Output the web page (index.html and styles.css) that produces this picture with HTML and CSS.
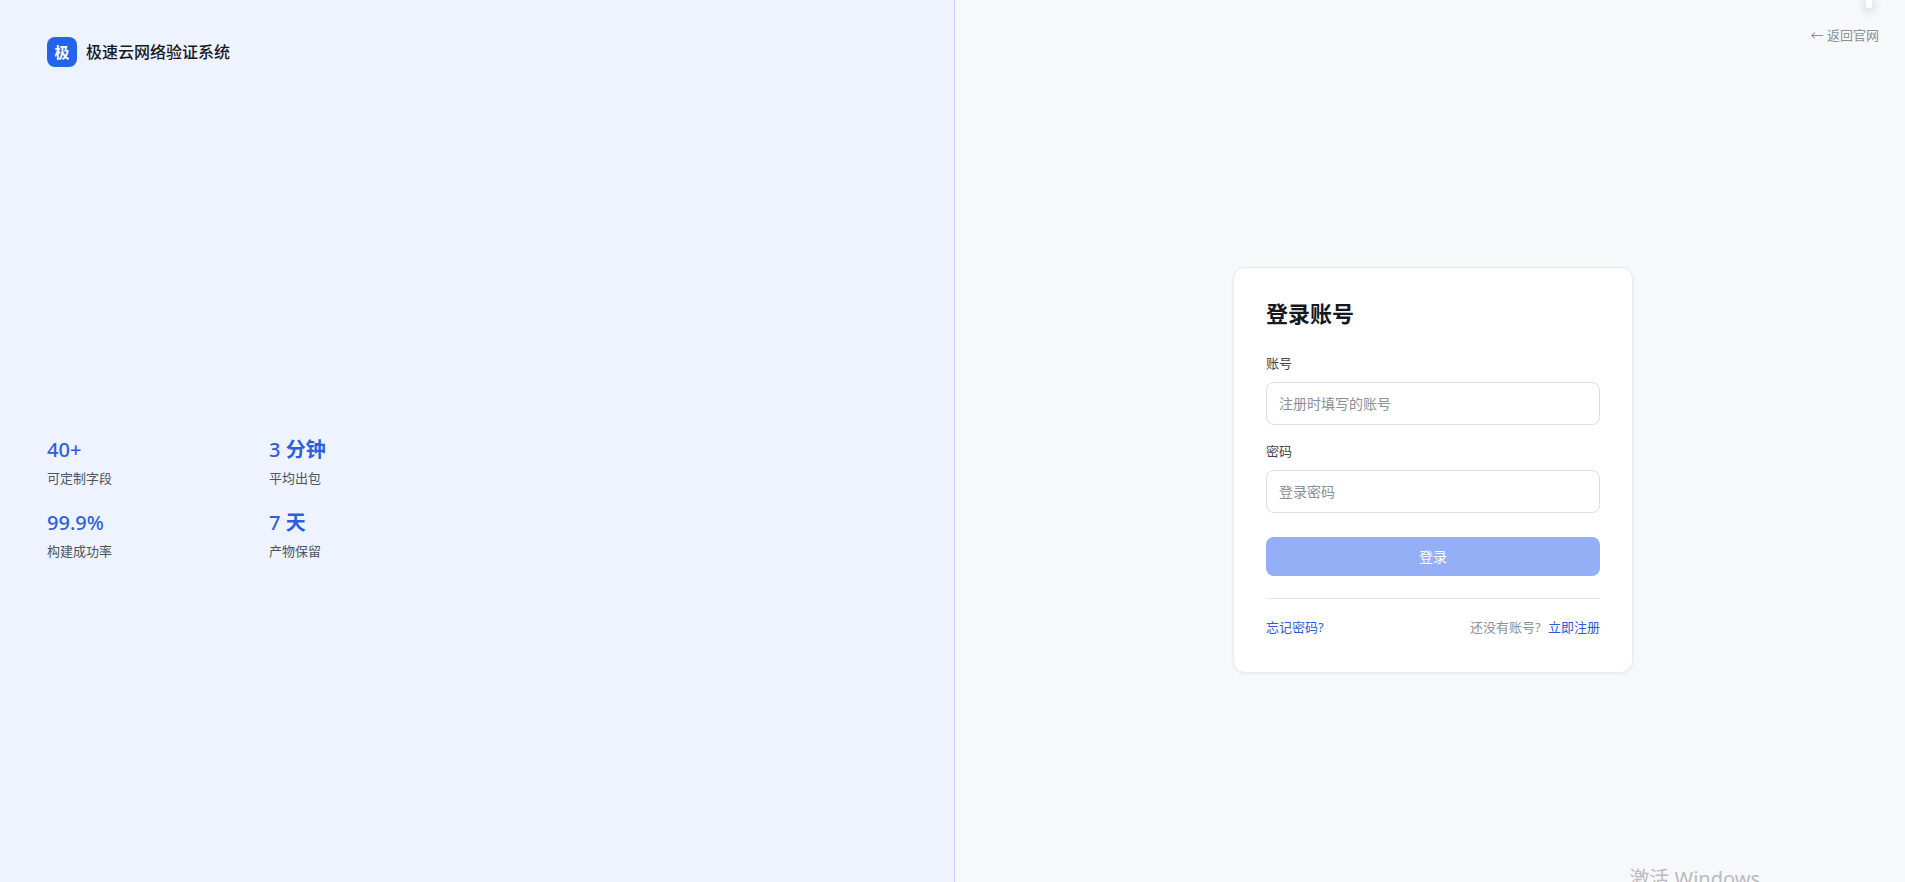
FILE: index.html
```html
<!DOCTYPE html>
<html lang="zh-CN">
<head>
<meta charset="utf-8">
<title>登录账号 - 极速云网络验证系统</title>
<link rel="stylesheet" href="styles.css">
</head>
<body>
<div class="page">
  <aside class="intro">
    <div class="brand"><span class="brand-mark">极</span><span class="brand-name">极速云网络验证系统</span></div>
    <dl class="stats">
      <div class="stat"><dt class="stat-label">可定制字段</dt><dd class="stat-value"><span class="num">40+</span></dd></div>
      <div class="stat"><dt class="stat-label">平均出包</dt><dd class="stat-value"><span class="num">3</span> 分钟</dd></div>
      <div class="stat"><dt class="stat-label">构建成功率</dt><dd class="stat-value"><span class="num">99.9%</span></dd></div>
      <div class="stat"><dt class="stat-label">产物保留</dt><dd class="stat-value"><span class="num">7</span> 天</dd></div>
    </dl>
  </aside>
  <main class="auth">
    <a class="back" href="#">← 返回官网</a>
    <section class="card">
      <h1 class="title">登录账号</h1>
      <form>
        <div class="field">
          <label for="account">账号</label>
          <input id="account" type="text" placeholder="注册时填写的账号">
        </div>
        <div class="field">
          <label for="password">密码</label>
          <input id="password" type="password" placeholder="登录密码">
        </div>
        <button class="submit" type="submit" disabled>登录</button>
      </form>
      <footer class="links">
        <a href="#">忘记密码?</a>
        <span class="signup">还没有账号? <a href="#">立即注册</a></span>
      </footer>
    </section>
  </main>
  <div class="handle"></div>
  <div class="watermark">激活 Windows</div>
</div>
</body>
</html>
```

FILE: styles.css
```css
* {
  box-sizing: border-box;
}

body {
  margin: 0;
  color: #15181e;
  font-family: "Noto Sans", "Noto Sans CJK SC", sans-serif;
  font-size: 13px;
  line-height: 21px;
}

a {
  color: #2d5bd7;
  text-decoration: none;
}

.page {
  position: relative;
  display: grid;
  grid-template-columns: 955fr 950fr;
  min-height: 100vh;
  overflow: hidden;
}

.intro {
  display: flex;
  flex-direction: column;
  padding: 37px 47px;
  border-right: 1px solid #c9d8fb;
  background: #eef3ff;
}

.brand {
  display: flex;
  align-items: center;
  gap: 9px;
}

.brand-mark {
  display: grid;
  place-items: center;
  width: 30px;
  height: 30px;
  border-radius: 8px;
  background: #2563eb;
  color: #fff;
  font-size: 15px;
  font-weight: 700;
}

.brand-name {
  font-size: 16px;
  font-weight: 500;
}

.stats {
  display: grid;
  grid-template-columns: 1fr 1fr;
  gap: 20px 24px;
  width: 100%;
  max-width: 420px;
  margin: auto 0;
  padding-top: 86px;
}

.stat {
  display: flex;
  flex-direction: column-reverse;
  gap: 4px;
}

.stat-value {
  margin: 0;
  color: #2d5fdd;
  font-size: 20px;
  font-weight: 700;
  line-height: 28px;
}

.num {
  font-weight: 500;
}

.stat-label {
  color: #4b5563;
}

.auth {
  position: relative;
  display: flex;
  align-items: center;
  justify-content: center;
  padding: 58px 26px 0 32px;
  background: #f7f8fa;
}

.back {
  position: absolute;
  top: 25px;
  right: 26px;
  color: #8b8f98;
}

.card {
  width: 100%;
  max-width: 400px;
  padding: 32px;
  border: 1px solid #e8eaee;
  border-radius: 12px;
  background: #fff;
  box-shadow: 0 1px 3px rgba(15, 23, 42, 0.06);
}

.title {
  margin: 0 0 26px;
  font-size: 22px;
  font-weight: 700;
  line-height: 27px;
}

.field {
  display: flex;
  flex-direction: column;
  gap: 8px;
  margin-bottom: 16px;
}

.field label {
  color: #41454e;
}

.field input {
  width: 100%;
  height: 43px;
  padding: 0 12px;
  border: 1px solid #dcdee3;
  border-radius: 8px;
  background: #fff;
  color: #15181e;
  font: inherit;
  font-size: 14px;
}

.field input::placeholder {
  color: #8b8f98;
}

.submit {
  width: 100%;
  height: 39px;
  margin-top: 8px;
  border: 0;
  border-radius: 8px;
  background: #95aff7;
  color: #fff;
  font: inherit;
  font-size: 14px;
}

.links {
  display: flex;
  justify-content: space-between;
  margin-top: 22px;
  padding: 18px 0 2px;
  border-top: 1px solid #e5e7ec;
  line-height: 21px;
}

.signup {
  color: #8b8f98;
}

.signup a {
  margin-left: 4px;
}

.handle {
  position: absolute;
  top: 0;
  right: 33px;
  width: 6px;
  height: 8px;
  border-radius: 0 0 2px 2px;
  background: #fff;
  box-shadow: 0 2px 10px 2px rgba(0, 0, 0, 0.14);
}

.watermark {
  position: absolute;
  right: 145px;
  bottom: -11px;
  color: #b9bbbe;
  font-size: 20px;
  line-height: 28px;
}
```
